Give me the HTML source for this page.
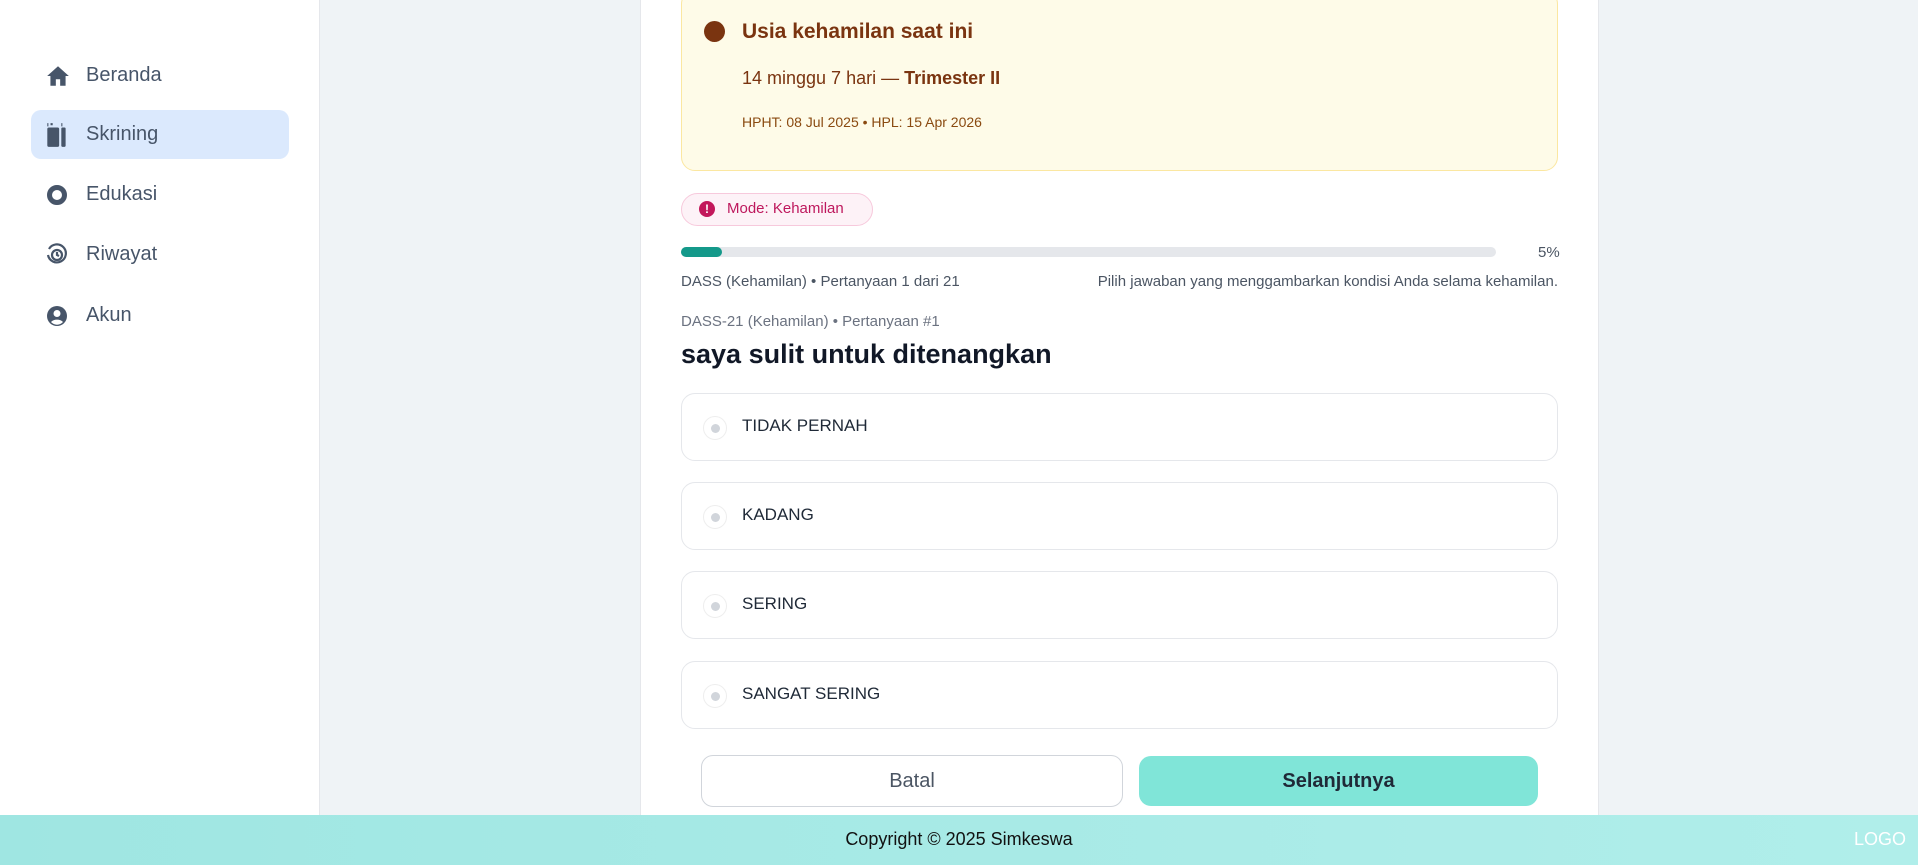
<!DOCTYPE html>
<html><head><meta charset="utf-8"><style>
*{box-sizing:border-box;margin:0;padding:0}
body{width:1918px;height:865px;overflow:hidden;background:#eff3f6;font-family:"Liberation Sans",sans-serif;position:relative;color:#374151}
.side{position:absolute;left:0;top:0;width:320px;height:815px;background:#fff;border-right:1px solid #e5e7eb}
.nav{position:absolute;left:31px;width:258px;height:49px;border-radius:10px;display:flex;align-items:center;font-size:20px;color:#475569}
.nav svg{position:absolute;left:14px}
.nav span{position:absolute;left:55px}
.nav.act{background:#dbe9fd}
.card{position:absolute;left:640px;top:0;width:959px;height:815px;background:#fff;border-left:1px solid #e5e7eb;border-right:1px solid #e5e7eb}
.abs{position:absolute}
.yel{left:681px;top:-10px;width:877px;height:181px;background:#fefbe8;border:1px solid #fbe7a1;border-radius:14px}
.opt{position:absolute;left:681px;width:877px;height:68px;border:1px solid #e5e7eb;border-radius:14px}
.opt .r{position:absolute;left:21px;top:22px;width:24px;height:24px;border:1px solid #eee;border-radius:50%}
.opt .r:after{content:"";position:absolute;left:7px;top:7px;width:9px;height:9px;border-radius:50%;background:#d1d5db}
.opt span{position:absolute;left:60px;top:22px;font-size:17px;color:#1f2937}
</style></head><body>
<div class="side">
 <div class="nav" style="top:51px"><svg width="26" height="26" viewBox="0 0 24 24"><path d="M12 3 2 12h3v9h5v-6h4v6h5v-9h3z" fill="#475569"/></svg><span>Beranda</span></div>
 <div class="nav act" style="top:110px"><svg width="24" height="28" viewBox="0 0 22 26"><path d="M2 2h1v3H2zM5 2h2v2H5zM15 2h1v3h-1z" fill="#475569"/><rect x="2" y="6" width="11" height="18" rx="1.5" fill="#475569"/><rect x="15" y="6" width="4" height="18" rx="1" fill="#475569"/></svg><span>Skrining</span></div>
 <div class="nav" style="top:170px"><svg width="24" height="24" viewBox="0 0 24 24"><circle cx="12" cy="12" r="7.5" fill="none" stroke="#475569" stroke-width="5"/></svg><span>Edukasi</span></div>
 <div class="nav" style="top:230px"><svg width="24" height="24" viewBox="0 0 24 24" fill="none" stroke="#475569" stroke-width="2.2"><path d="M4 6A9 9 0 1 1 3 12"/><circle cx="12" cy="12" r="5"/><path d="M12 9v3l2 1"/></svg><span>Riwayat</span></div>
 <div class="nav" style="top:291px"><svg width="24" height="24" viewBox="0 0 24 24"><circle cx="12" cy="12" r="10" fill="#475569"/><circle cx="12" cy="9.5" r="3.5" fill="#fff"/><path d="M6 18a7 5 0 0 1 12 0a8 8 0 0 1-12 0" fill="#fff"/></svg><span>Akun</span></div>
</div>
<div class="card"></div>
<div class="abs yel"></div>
<div class="abs" style="left:704px;top:21px;width:21px;height:21px;border-radius:50%;background:#7a3410"></div>
<div class="abs" style="left:742px;top:20px;font-size:21px;font-weight:bold;color:#7a3410">Usia kehamilan saat ini</div>
<div class="abs" style="left:742px;top:68px;font-size:18px;color:#7a3410">14 minggu 7 hari — <b style="font-weight:600">Trimester II</b></div>
<div class="abs" style="left:742px;top:114px;font-size:14px;color:#8a4a10">HPHT: 08 Jul 2025 • HPL: 15 Apr 2026</div>
<div class="abs" style="left:681px;top:193px;width:192px;height:33px;border:1px solid #f7c9dc;background:#fdf2f7;border-radius:17px"></div>
<div class="abs" style="left:699px;top:201px;width:16px;height:16px;border-radius:50%;background:#c2185b;color:#fff;font-size:12px;font-weight:bold;text-align:center;line-height:16px">!</div>
<div class="abs" style="left:727px;top:200px;font-size:15px;color:#be185d">Mode: Kehamilan</div>
<div class="abs" style="left:681px;top:247px;width:815px;height:10px;border-radius:5px;background:#e5e7eb"></div>
<div class="abs" style="left:681px;top:247px;width:41px;height:10px;border-radius:5px;background:#14998a"></div>
<div class="abs" style="left:1538px;top:244px;font-size:15px;color:#4b5563">5%</div>
<div class="abs" style="left:681px;top:273px;font-size:15px;color:#4b5563">DASS (Kehamilan) • Pertanyaan 1 dari 21</div>
<div class="abs" style="left:1032px;top:273px;font-size:15px;color:#4b5563;width:526px;text-align:right">Pilih jawaban yang menggambarkan kondisi Anda selama kehamilan.</div>
<div class="abs" style="left:681px;top:313px;font-size:15px;color:#6b7280">DASS-21 (Kehamilan) • Pertanyaan #1</div>
<div class="abs" style="left:681px;top:339px;font-size:27px;font-weight:bold;color:#111827">saya sulit untuk ditenangkan</div>
<div class="opt" style="top:393px"><div class="r"></div><span>TIDAK PERNAH</span></div>
<div class="opt" style="top:482px"><div class="r"></div><span>KADANG</span></div>
<div class="opt" style="top:571px"><div class="r"></div><span>SERING</span></div>
<div class="opt" style="top:661px"><div class="r"></div><span>SANGAT SERING</span></div>
<div class="abs" style="left:701px;top:755px;width:422px;height:52px;border:1px solid #d1d5db;border-radius:12px;text-align:center;line-height:50px;font-size:20px;color:#4b5563">Batal</div>
<div class="abs" style="left:1139px;top:756px;width:399px;height:50px;background:#80e5d8;border-radius:12px;text-align:center;line-height:50px;font-size:20px;font-weight:bold;color:#1f2937">Selanjutnya</div>
<div class="abs" style="left:0;top:815px;width:1918px;height:50px;background:linear-gradient(90deg,#9fe6e2,#b0eeea)"></div>
<div class="abs" style="left:0;top:829px;width:1918px;text-align:center;font-size:18px;color:#111">Copyright © 2025 Simkeswa</div>
<div class="abs" style="left:1854px;top:829px;font-size:18px;color:#fff">LOGO</div>
</body></html>
